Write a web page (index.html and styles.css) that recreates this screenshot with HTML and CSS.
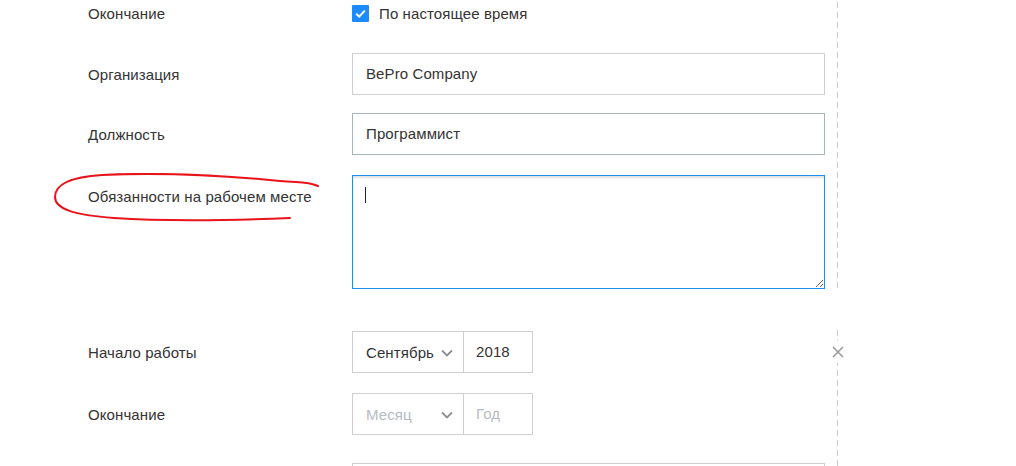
FILE: index.html
```html
<!DOCTYPE html>
<html lang="ru">
<head>
<meta charset="utf-8">
<title>Опыт работы</title>
<link rel="stylesheet" href="styles.css">
</head>
<body>
<div class="page">
  <section class="block block-first">
    <div class="row row-check">
      <div class="lbl">Окончание</div>
      <div class="field check-field">
        <span class="cb"><svg width="17" height="17" viewBox="0 0 17 17"><path d="M4.2 8.8 L7.2 11.6 L12.8 5.6" fill="none" stroke="#fff" stroke-width="2"/></svg></span>
        <span class="cb-text">По настоящее время</span>
      </div>
    </div>
    <div class="row">
      <div class="lbl">Организация</div>
      <div class="field"><div class="input">BePro Company</div></div>
    </div>
    <div class="row">
      <div class="lbl">Должность</div>
      <div class="field"><div class="input input-hover">Программист</div></div>
    </div>
    <div class="row row-area">
      <div class="lbl">Обязанности на рабочем месте</div>
      <div class="field area-wrap">
        <textarea class="area"></textarea>
        <span class="caret"></span>
      </div>
    </div>
    <svg class="scribble" width="280" height="60" viewBox="0 0 280 60">
      <path d="M266 13 C254 8 246 10 228 8 C178 3 110 -1 50 2 C18 4 3 12 3 24 C3 36 22 42 62 45 C122 49 190 47 238 45" fill="none" stroke="#e8141a" stroke-width="2" stroke-linecap="round"/>
    </svg>
  </section>

  <section class="block block-second">
    <button class="remove" type="button" aria-label="Удалить">
      <svg width="12" height="12" viewBox="0 0 12 12"><path d="M1 1 L11 11 M11 1 L1 11" stroke="#999" stroke-width="1.5"/></svg>
    </button>
    <div class="row">
      <div class="lbl">Начало работы</div>
      <div class="field">
        <div class="date">
          <div class="month">Сентябрь<svg class="chev" width="12" height="8" viewBox="0 0 12 8"><path d="M1 1.5 L6 6.5 L11 1.5" fill="none" stroke="#8a8f95" stroke-width="1.8"/></svg></div>
          <div class="year">2018</div>
        </div>
      </div>
    </div>
    <div class="row">
      <div class="lbl">Окончание</div>
      <div class="field">
        <div class="date">
          <div class="month ph">Месяц<svg class="chev" width="12" height="8" viewBox="0 0 12 8"><path d="M1 1.5 L6 6.5 L11 1.5" fill="none" stroke="#8a8f95" stroke-width="1.8"/></svg></div>
          <div class="year ph">Год</div>
        </div>
      </div>
    </div>
    <div class="row row-last">
      <div class="lbl"></div>
      <div class="field"><div class="input"></div></div>
    </div>
  </section>
</div>
</body>
</html>
```

FILE: styles.css
```css
html, body {
  margin: 0;
  padding: 0;
  background: #fff;
  overflow: hidden;
}
body {
  font-family: "Liberation Sans", Arial, sans-serif;
  font-size: 15px;
  letter-spacing: 0.1px;
  color: #333;
}
.page {
  padding-left: 88px;
  margin-top: -8px;
}
.block {
  position: relative;
  width: 750px;
  display: flex;
  flex-direction: column;
  gap: 18px;
  background: repeating-linear-gradient(to bottom, #c9c9c9 0 6px, transparent 6px 10px) right top / 1px 100% no-repeat;
}
.block-second {
  margin-top: 41px;
  padding-top: 1px;
  gap: 20px;
}
.row {
  display: flex;
  align-items: flex-start;
}
.lbl {
  width: 264px;
  height: 42px;
  flex: none;
  line-height: 43px;
  color: #333;
  white-space: nowrap;
}
.field {
  width: 473px;
}
.row-check .lbl {
  height: 43px;
  line-height: 43px;
}
.check-field {
  height: 43px;
  display: flex;
  align-items: center;
}
.cb {
  width: 17px;
  height: 17px;
  background: #1a8cff;
  border-radius: 1px;
  display: block;
}
.cb svg { display: block; }
.cb-text {
  margin-left: 10px;
  color: #333;
}
.input {
  box-sizing: border-box;
  height: 42px;
  border: 1px solid #cfcfcf;
  padding: 0 13px;
  line-height: 40px;
  color: #333;
}
.input-hover {
  border-color: #a9b3ba;
}
.row-area {
  margin-top: 2px;
}
.area-wrap {
  position: relative;
  height: 114px;
}
.area {
  display: block;
  box-sizing: border-box;
  width: 473px;
  height: 114px;
  margin: 0;
  border: 1px solid #1a90f5;
  box-shadow: inset 0 2px 2px rgba(0, 0, 0, 0.12);
  padding: 12px 13px;
  font: inherit;
  resize: vertical;
  outline: none;
}
.caret {
  position: absolute;
  left: 13px;
  top: 12px;
  width: 1px;
  height: 16px;
  background: #222;
}
.scribble {
  position: absolute;
  left: -36px;
  top: 181px;
  pointer-events: none;
}
.date {
  display: flex;
  height: 42px;
}
.month {
  box-sizing: border-box;
  width: 112px;
  height: 42px;
  border: 1px solid #cfcfcf;
  padding: 0 10px 0 13px;
  display: flex;
  align-items: center;
  justify-content: space-between;
  color: #333;
}
.chev { display: block; margin-top: 1px; flex: none; }
.year {
  box-sizing: border-box;
  width: 69px;
  height: 42px;
  border: 1px solid #cfcfcf;
  border-left: none;
  padding: 0 12px;
  line-height: 40px;
  color: #333;
}
.ph { color: #b8bcc0; }
.row-last {
  margin-top: 8px;
}
.remove {
  position: absolute;
  left: 743px;
  top: 11px;
  width: 14px;
  height: 22px;
  padding: 0;
  border: none;
  background: #fff;
  display: flex;
  align-items: center;
  justify-content: center;
  cursor: pointer;
}
.remove svg { display: block; }
```
